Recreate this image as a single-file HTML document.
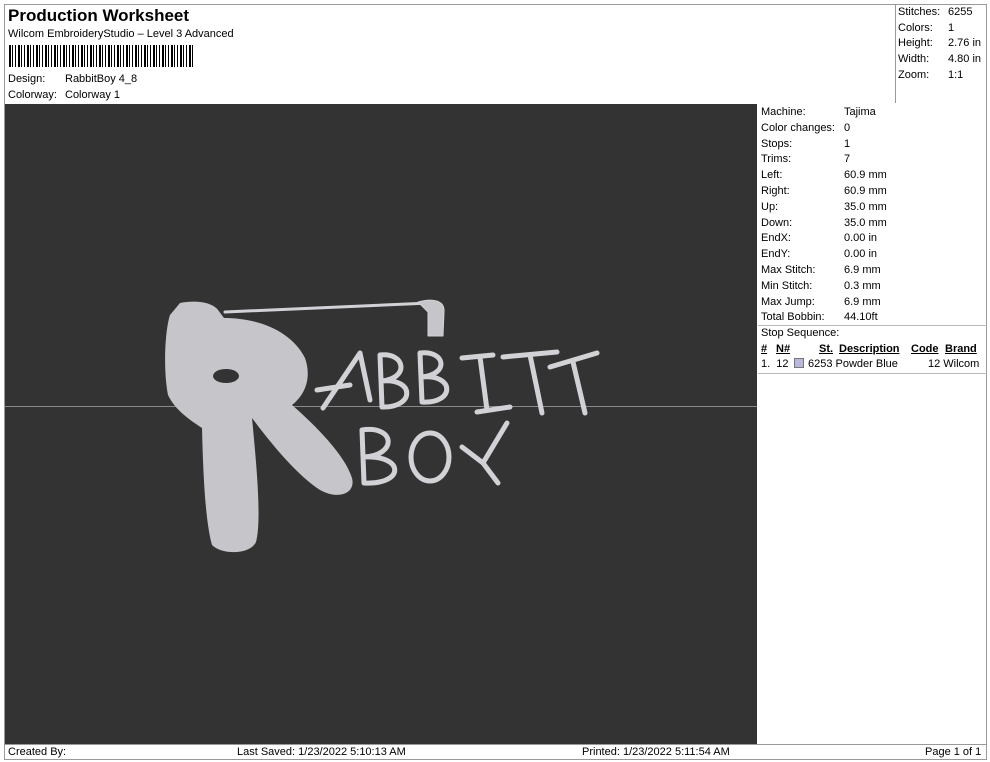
<!DOCTYPE html>
<html><head><style>
*{margin:0;padding:0;box-sizing:border-box}
body{width:990px;height:762px;background:#fff;font-family:"Liberation Sans",Arial,sans-serif;font-size:11px;color:#000;position:relative;overflow:hidden}
.a{position:absolute;white-space:nowrap}
.b{position:absolute;border:1px solid #999}
</style></head><body>
<div class="b" style="left:4px;top:4px;width:983px;height:756px"></div>
<div class="a" style="left:8px;top:6px;font-size:17px;font-weight:bold">Production Worksheet</div>
<div class="a" style="left:8px;top:28px">Wilcom EmbroideryStudio – Level 3 Advanced</div>
<div class="a" style="left:9px;top:45px;width:186px;height:22px;background:repeating-linear-gradient(90deg,#000 0 2px,#fff 2px 3px,#000 3px 4px,#fff 4px 6px,#000 6px 7px,#fff 7px 9px)"></div>
<div class="a" style="left:8px;top:73px">Design:</div><div class="a" style="left:65px;top:73px">RabbitBoy 4_8</div>
<div class="a" style="left:8px;top:89px">Colorway:</div><div class="a" style="left:65px;top:89px">Colorway 1</div>
<div class="b" style="left:895px;top:4px;width:1px;height:99px;border-width:0 0 0 1px"></div>
<div class="a" style="left:898px;top:5px;line-height:15.7px">Stitches:<br>Colors:<br>Height:<br>Width:<br>Zoom:</div>
<div class="a" style="left:948px;top:5px;line-height:15.7px">6255<br>1<br>2.76 in<br>4.80 in<br>1:1</div>
<div class="a" style="left:5px;top:104px;width:752px;height:641px;background:#333"></div>
<div class="a" style="left:5px;top:406px;width:752px;height:1px;background:#888"></div>
<svg class="a" style="left:0;top:0" width="757" height="745">
<path fill="#c6c6ca" d="M180 303 C195 300 212 302 218 310 L224 318 C260 318 292 332 305 358 C312 378 305 395 292 405 C315 425 345 455 352 478 C356 494 338 500 320 490 C298 476 272 445 252 418 C256 460 262 520 256 542 C250 555 222 555 212 545 C205 520 203 470 202 428 C190 420 175 410 168 395 C163 370 165 330 170 315 Z"/>
<ellipse cx="226" cy="376" rx="13" ry="7" fill="#333"/>
<g fill="none" stroke="#d2d2d6" stroke-width="5" stroke-linecap="round" stroke-linejoin="round">
<path d="M225 312 L430 303" stroke-width="3"/>
<path d="M418 302 C432 298 445 300 444 312 L443 336 L428 336 L428 312 Z" fill="#c6c6ca" stroke-width="1"/>
<path d="M323 408 L360 353 L370 400 M317 390 L350 385"/>
<path d="M380 355 L382 407 M380 355 C405 352 410 378 382 381 C415 378 415 408 382 407"/>
<path d="M420 353 L422 402 M420 353 C445 350 450 374 422 377 C455 374 455 404 422 402"/>
<path d="M462 358 L493 355 M480 357 L487 410 M477 412 L510 407"/>
<path d="M503 357 L557 352 M530 355 L542 413"/>
<path d="M550 367 L597 353 M573 362 L585 413"/>
<path d="M362 430 L364 483 M362 430 C395 425 398 455 364 457 C405 455 405 485 364 483"/>
<ellipse cx="430" cy="457" rx="19" ry="24"/>
<path d="M462 447 L483 463 L507 423 M483 463 L498 483"/>
</g>
</svg>
<div class="a" style="left:761px;top:105px;line-height:15.8px">Machine:<br>Color changes:<br>Stops:<br>Trims:<br>Left:<br>Right:<br>Up:<br>Down:<br>EndX:<br>EndY:<br>Max Stitch:<br>Min Stitch:<br>Max Jump:<br>Total Bobbin:</div>
<div class="a" style="left:844px;top:105px;line-height:15.8px">Tajima<br>0<br>1<br>7<br>60.9 mm<br>60.9 mm<br>35.0 mm<br>35.0 mm<br>0.00 in<br>0.00 in<br>6.9 mm<br>0.3 mm<br>6.9 mm<br>44.10ft</div>
<div class="a" style="left:758px;top:325px;width:229px;height:1px;background:#bbb"></div>
<div class="a" style="left:761px;top:327px">Stop Sequence:</div>
<div class="a" style="left:761px;top:343px;font-weight:bold;text-decoration:underline">#</div>
<div class="a" style="left:776px;top:343px;font-weight:bold;text-decoration:underline">N#</div>
<div class="a" style="left:819px;top:343px;font-weight:bold;text-decoration:underline">St.</div>
<div class="a" style="left:839px;top:343px;font-weight:bold;text-decoration:underline">Description</div>
<div class="a" style="left:911px;top:343px;font-weight:bold;text-decoration:underline">Code</div>
<div class="a" style="left:945px;top:343px;font-weight:bold;text-decoration:underline">Brand</div>
<div class="a" style="left:761px;top:358px">1.&nbsp; 12</div>
<div class="a" style="left:794px;top:358px;width:10px;height:10px;background:#b8b8dc;border:1px solid #777"></div>
<div class="a" style="left:808px;top:358px">6253 Powder Blue</div>
<div class="a" style="left:928px;top:358px">12 Wilcom</div>
<div class="a" style="left:758px;top:373px;width:229px;height:1px;background:#bbb"></div>
<div class="a" style="left:4px;top:744px;width:983px;height:1px;background:#999"></div>
<div class="a" style="left:8px;top:746px">Created By:</div>
<div class="a" style="left:237px;top:746px">Last Saved: 1/23/2022 5:10:13 AM</div>
<div class="a" style="left:582px;top:746px">Printed: 1/23/2022 5:11:54 AM</div>
<div class="a" style="left:925px;top:746px">Page 1 of 1</div>
</body></html>
